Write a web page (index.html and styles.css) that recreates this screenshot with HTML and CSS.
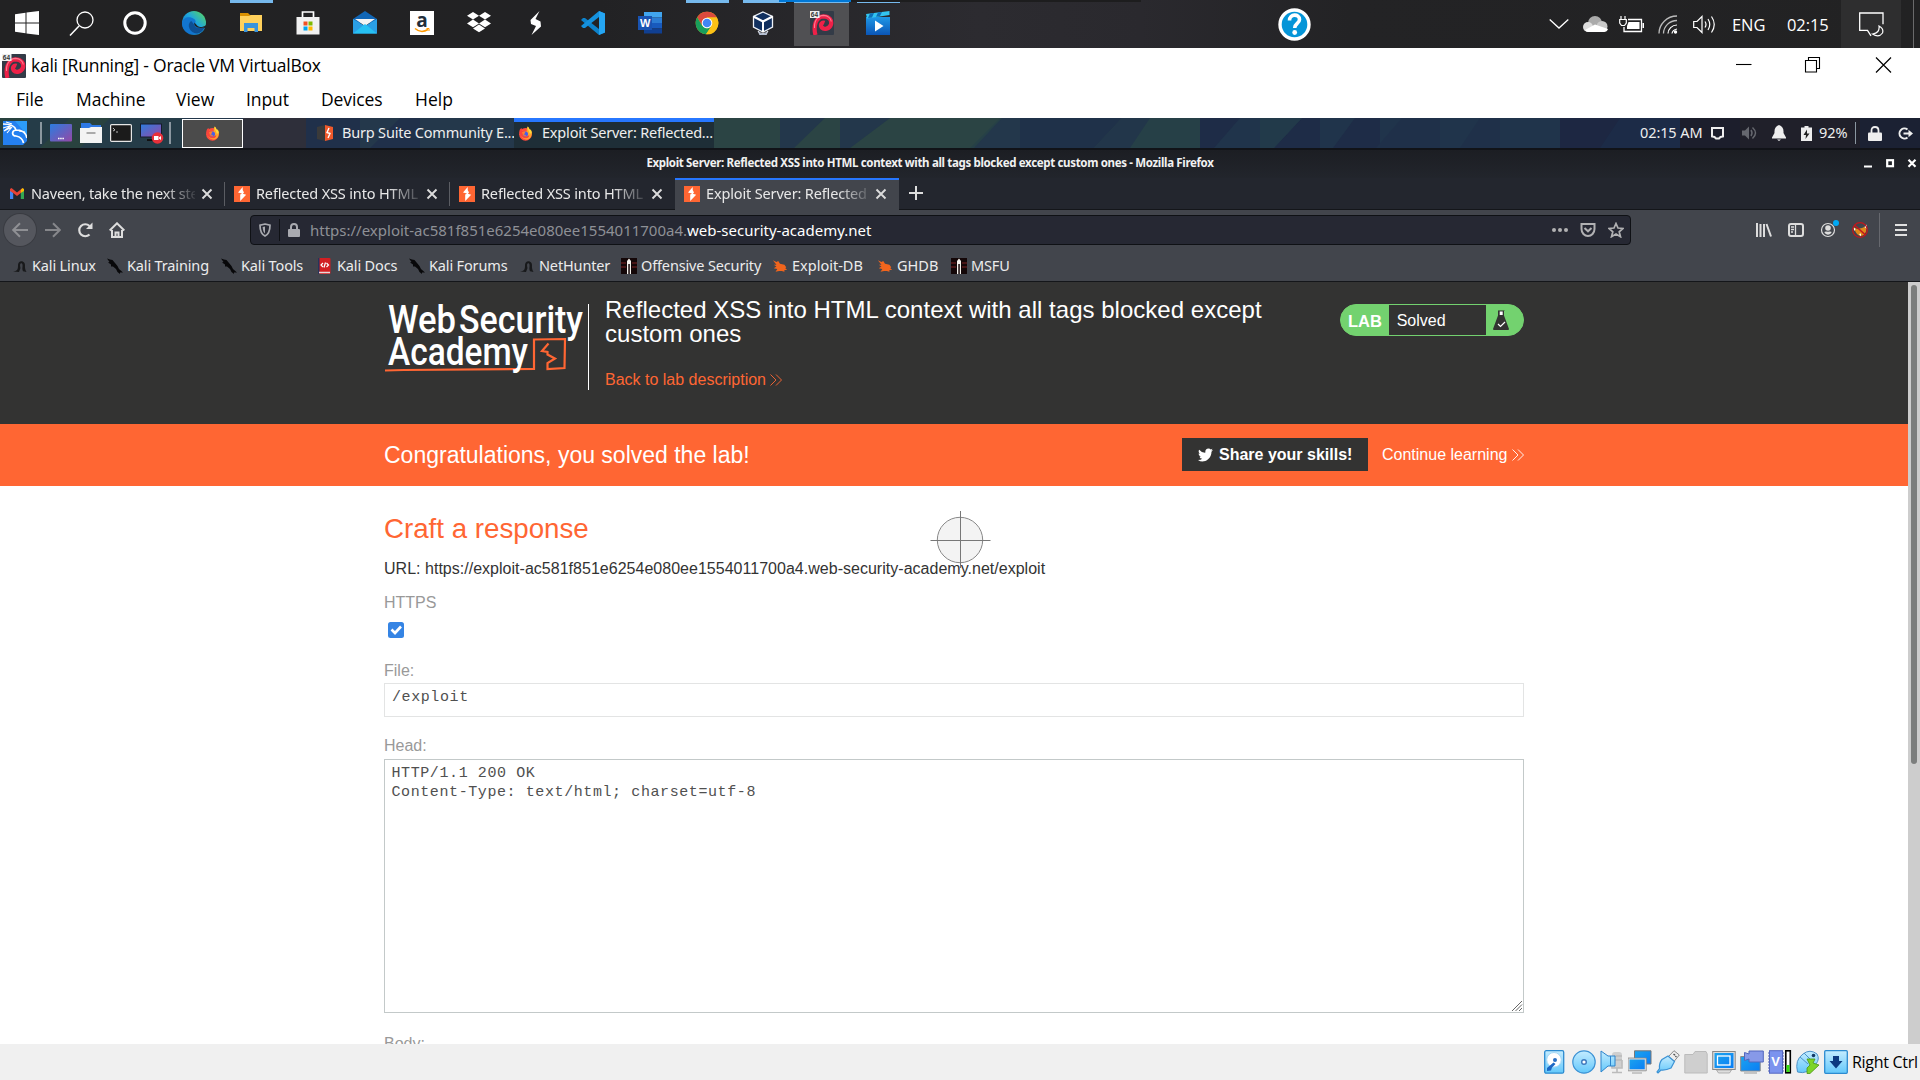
FILE: index.html
```html
<!DOCTYPE html>
<html lang="en">
<head>
<meta charset="utf-8">
<title>kali [Running] - Oracle VM VirtualBox</title>
<link rel="stylesheet" href="styles.css">
</head>
<body>
<svg class="defs" width="0" height="0" aria-hidden="true">
  <defs>
    <linearGradient id="gBlue" x1="0" y1="0" x2="0" y2="1"><stop offset="0" stop-color="#c4ecff"/><stop offset="1" stop-color="#63c8fb"/></linearGradient>
    <linearGradient id="gScreen" x1="0" y1="0" x2="1" y2="1"><stop offset="0" stop-color="#2b7de0"/><stop offset="1" stop-color="#9548a5"/></linearGradient>
    <linearGradient id="gEdge" x1="0" y1="1" x2="1" y2="0"><stop offset="0" stop-color="#0c59a4"/><stop offset=".55" stop-color="#1fa6df"/><stop offset="1" stop-color="#5fdc4f"/></linearGradient>
    <linearGradient id="gPlay" x1="0" y1="0" x2="0" y2="1"><stop offset="0" stop-color="#1f97e6"/><stop offset="1" stop-color="#0b55b6"/></linearGradient>
    <linearGradient id="gDeep" x1="0" y1="0" x2="1" y2="1"><stop offset="0" stop-color="#1ca4ee"/><stop offset="1" stop-color="#0a7df5"/></linearGradient>
    <symbol id="burp" viewBox="0 0 16 16"><rect width="16" height="16" fill="#f63"/><path d="M8.7 1 4 6.6 8 7.6 6.2 8.6V15L12.2 8.8 8.9 7.7 10 6.5 8.7 4z" fill="#fff"/></symbol>
    <symbol id="fox" viewBox="0 0 16 16"><circle cx="8" cy="8.8" r="6.8" fill="#ff4a3d"/><path d="M3 4.5C2 8 3 13.5 8.5 14.5 14 14.6 16.3 8.5 13.5 4.5 12.7 4.500 12 2.500 10.500.5 8.500 2.500 10 5 9 6z" fill="#ffa52b"/><path d="M10.500.5C9.500 3 12 5 12.500 8L14.500 8C15 6 14 4 13 3.500L13 5C12 3 11.500 1.500 10.500.5z" fill="#ffdc3b"/><path d="M1.500 7C1 3.500 3.500 2 4 2.500L4.500 5 7.500 6 7 8 5 9.500C7 12 10.500 11 12 9.500 12.500 14 4 15.500 1.500 7z" fill="#f9443c"/><circle cx="8" cy="8.500" r="2.700" fill="#485ee8"/><path d="M4.300 6.500 8 6.200 6.500 9 9 10.500C6.500 11.500 4.500 9.500 4.300 6.500z" fill="#ff7d2e"/></symbol>
    <symbol id="debian" viewBox="0 0 24 24"><rect width="24" height="24" rx="1" fill="#333b47"/><path d="M5.500 24C3 15 6 5.500 13.500 5.300 19.500 5.300 22 9.500 21 13.500 19.500 18 14 19 11.800 16.500 9.800 13.500 12 10.800 14.500 11.800" fill="none" stroke="#ee2148" stroke-width="4.200"/><path d="M4.500 17C4 9.500 8 4.600 13.500 4.400 18 4.400 21 7.500 21.300 10.500" fill="none" stroke="#ff7b91" stroke-width="1.100"/><rect width="9.500" height="7" fill="#eee"/><text x=".8" y="6" font-size="6.500" font-weight="700" font-family="Liberation Sans" fill="#333">64</text></symbol>
    <symbol id="slash" viewBox="0 0 16 16"><path d="M0 .5 3 1.500 5.500 2 8 5 10.500 8 12 11 16 14.500 13 14.500 13 16 10.500 14 9 11 6 8.500 4 8.500 4 6.500 1 4.500 2.500 4z" fill="#08080a"/></symbol>
    <symbol id="arch" viewBox="0 0 16 16"><path d="M1 13.500C5 13 6 11.500 6 8 5.500 3.500 10 1.500 12.500 5 13.700 7.500 12 9.500 14.500 14L11 13.300C9.500 10 11.500 7.500 10 5.500 7.500 4.500 8 8 8.500 10L7 14z" fill="#18191b"/></symbol>
    <symbol id="roach" viewBox="-1 -1.500 18 18"><path d="M0 1 4 3 6 2 8 5 13 6 15 9 14 10 16 12 13 12 13 14 10 13 7 13 3 14 5 11 1 10 4 8 1 6 4 6z" fill="#f1651d"/></symbol>
    <symbol id="offsec" viewBox="0 0 16 16"><rect width="16" height="16" fill="#140708"/><path d="M0 5H5M0 9H5M11 5H16M11 9H16" stroke="#5a1a1a" stroke-width="1.500"/><path d="M6 16V3L8 .5 10 3V16H8.800V6H7.300V16z" fill="#f5f1ec"/></symbol>
    <symbol id="close" viewBox="0 0 12 12"><path d="M1.500 1.500 10.500 10.500M10.500 1.500 1.500 10.500" stroke="#dcdcdc" stroke-width="1.900"/></symbol>
    <symbol id="chev" viewBox="0 0 12 12"><path d="M.5.500 6 6 .5 11.500M6 .5 11.500 6 6 11.500" fill="none" stroke="currentColor" stroke-width=".9"/></symbol>
  </defs>
</svg>

<div class="desktop">
  <header class="taskbar">
    <div class="sys-slots">
      <div class="slot"><svg width="24" height="24" viewBox="0 0 24 24"><path d="M0 3.200 10.500 1.800V11.500H0zM11.500 1.600 24 0V11.500H11.500zM0 12.500H10.500V22.200L0 20.800zM11.500 12.500H24V24L11.500 22.400z" fill="#fff"/></svg></div>
      <div class="slot"><svg width="25" height="25" viewBox="0 0 25 25"><circle cx="16" cy="9" r="8" fill="none" stroke="#fff" stroke-width="1.300"/><path d="M10 15 1 24.500" stroke="#fff" stroke-width="1.500"/></svg></div>
      <div class="slot"><svg width="24" height="24" viewBox="0 0 24 24"><circle cx="12" cy="12" r="10.200" fill="none" stroke="#fff" stroke-width="3"/></svg></div>
    </div>
    <div class="apps">
      <div class="slot"><svg width="24" height="24" viewBox="0 0 24 24"><circle cx="12" cy="12" r="12" fill="url(#gEdge)"/><path d="M0 12C1 6 8 5 12 8 15 10 13 12 12.500 13 14 18 20 17 23 15.500 20 22 12 25 6 22 2 20 0 16 0 12z" fill="#1275cf"/><path d="M9 10C4 14 8 22 15 22.500 19 22 22 19 23 15.500 18 18 13 17.500 12 13.500 11 12 10 10.500 9 10z" fill="#0d4f94"/><path d="M12.500 11.500C15 14 15 16 20 16 22 15.500 23 15 24 14L24 19 22 16.500C16 18 11 15 12.500 11.500z" fill="#212123"/></svg></div>
      <div class="slot open"><svg width="24" height="24" viewBox="0 0 24 24"><path d="M1 2H9L11 4H12V8H1z" fill="#d99000"/><path d="M1 5H10L12 4H23V20H1z" fill="#ffd15c"/><path d="M5 12H19V21H15.500V17H8.500V21H5z" fill="#3a94dc"/></svg></div>
      <div class="slot"><svg width="24" height="24" viewBox="0 0 24 24"><path d="M6.500 6V1H17.500V6" fill="none" stroke="#fff" stroke-width="1.700"/><path d="M.5 6H23.500V23.500H.5z" fill="#f1f1f1"/><path d="M7.500 10.500H11.500V14.500H7.500z" fill="#f25022"/><path d="M12.500 10.500H16.500V14.500H12.500z" fill="#7fba00"/><path d="M7.500 15.500H11.500V19.500H7.500z" fill="#00a4ef"/><path d="M12.500 15.500H16.500V19.500H12.500z" fill="#ffb900"/></svg></div>
      <div class="slot"><svg width="24" height="24" viewBox="0 0 24 24"><path d="M0 8 12 0 24 8V12H0z" fill="#1166b5"/><path d="M2 8H22L12 15z" fill="#f4f4f4"/><path d="M0 8 12 15 24 8V22.500H0z" fill="#2a9fe6"/><path d="M0 22.500 12 13 24 22.500z" fill="#27c1f3"/></svg></div>
      <div class="slot"><svg width="24" height="24" viewBox="0 0 24 24"><rect width="24" height="24" fill="#fff"/><text x="6.300" y="15.500" font-family="Open Sans" font-weight="700" font-size="19" fill="#222e3b">a</text><path d="M5 17.500C9 21 14 21 18 18.500" fill="none" stroke="#f90" stroke-width="1.500"/><path d="M16.500 17.500H19V20" fill="none" stroke="#f90" stroke-width="1"/></svg></div>
      <div class="slot"><svg width="24" height="22" viewBox="0 0 24 22"><path d="M6 0 12 3.800 6 7.600 0 3.800zM18 0 24 3.800 18 7.600 12 3.800zM6 7.600 12 11.400 6 15.200 0 11.400zM18 7.600 24 11.400 18 15.200 12 11.400zM12 12.600 18 16.400 12 20.200 6 16.400z" fill="#fff"/></svg></div>
      <div class="slot"><svg width="14" height="24" viewBox="0 0 14 24"><path d="M10.500 0 1.500 9 2 13 7 15 2.500 24 12 15.500 11.500 10.500 6.500 8z" fill="#fff"/></svg></div>
      <div class="slot"><svg width="24" height="24" viewBox="0 0 24 24"><path d="M18 0 24 2.500V21.500L18 24 0 9 2 7 4 7 18 18z" fill="#0d82cb"/><path d="M18 0 24 2.500V21.500L18 24z" fill="#25a5f2"/><path d="M18 0V6L4 17 2 17 0 15z" fill="#1591dd"/></svg></div>
      <div class="slot"><svg width="24" height="24" viewBox="0 0 24 24"><path d="M6 1H24V6.500H6z" fill="#41a5ee"/><path d="M6 6.500H24V12H6z" fill="#2b7cd3"/><path d="M6 12H24V17.500H6z" fill="#185abd"/><path d="M6 17.500H24V22.500H6z" fill="#103f91"/><rect y="5" width="14" height="14" fill="#1953b1"/><text x="2" y="16" font-family="Liberation Sans" font-weight="700" font-size="11" fill="#fff">W</text></svg></div>
      <div class="slot open"><svg width="24" height="24" viewBox="0 0 24 24"><circle cx="12" cy="12" r="11.300" fill="#fbc116"/><path d="M2.200 6.300A11.300 11.300 0 0 1 21.800 6.400H12L7 14.500z" fill="#dc4a3d"/><path d="M2.200 6.300 7.200 14.800 12 17.600 16.500 15 11 23.300A11.300 11.300 0 0 1 2.200 6.300z" fill="#199f5b"/><path d="M12 6.400H21.800A11.300 11.300 0 0 1 11 23.300L16.500 15z" fill="#fbc116"/><circle cx="12" cy="12" r="5.300" fill="#fff"/><circle cx="12" cy="12" r="4.300" fill="#4286f4"/></svg></div>
      <div class="slot open"><svg class="nudge" width="22" height="24" viewBox="0 0 22 24"><path d="M6 20Q11 25 16 20L14 24H8z" fill="#8f9dbb" stroke="#e9edf5" stroke-width=".8"/><path d="M11 1 20.500 5.500V16L11 21 1.500 16V5.500z" fill="#11305f" stroke="#eef2f8" stroke-width="1.300"/><path d="M1.500 5.500 11 10.500 20.500 5.500M11 10.500V21" fill="none" stroke="#fff" stroke-width="2"/></svg></div>
      <div class="slot active"><svg width="24" height="24"><use href="#debian"/></svg></div>
      <div class="slot thin"><svg class="nudge" width="24" height="24" viewBox="0 0 24 24"><path d="M0 6H24V24H0z" fill="url(#gPlay)"/><path d="M0 3 23.500 0V4L1 7.500z" fill="#33c4f0"/><path d="M4 2.500 8 2 6 6.500 2 7zM12 1.500 16 1 14 5 10 5.700z" fill="#0c6fb8"/><path d="M9 9.500 17.500 15 9 20.500z" fill="#fff"/></svg></div>
    </div>
    <div class="help"><svg width="33" height="33" viewBox="0 0 33 33"><circle cx="16.500" cy="16.500" r="14.500" fill="#0495d8" stroke="#fff" stroke-width="3.400"/><path d="M11.500 12.500C11.500 5.500 21.500 5.500 21.500 11.500 21.500 15.500 16.700 15.500 16.700 20" fill="none" stroke="#fff" stroke-width="3.600"/><circle cx="16.700" cy="24.500" r="2.400" fill="#fff"/></svg></div>
    <div class="tray">
      <svg width="20" height="10" viewBox="0 0 20 10"><path d="M.7.500 10 9 19.300.500" fill="none" stroke="#fff" stroke-width="1.300"/></svg>
      <svg class="t-cloud" width="25" height="16" viewBox="0 0 25 16"><circle cx="12" cy="7" r="7" fill="#aaa"/><circle cx="5" cy="11" r="5" fill="#ddd"/><circle cx="19" cy="10.500" r="5.500" fill="#c9c9c9"/><path d="M2 14 12 8.500 25 13Q24 16 21 16H5Q3 16 2 14z" fill="#fff"/></svg>
      <svg class="t-bat" width="25" height="17" viewBox="0 0 25 17"><path d="M9 3.500H22.500V15.500H5V11" fill="none" stroke="#fff" stroke-width="1.300"/><path d="M9.500 6H20.500V13H8V10z" fill="#fff"/><path d="M23.500 7H25V12H23.500z" fill="#fff"/><path d="M2 0V3.500M6 0V3.500M.7 3.500H7.300V7L5.500 9.500H2.500L.7 7z" fill="#222" stroke="#fff" stroke-width="1.200"/></svg>
      <svg class="t-wifi" width="20" height="19" viewBox="0 0 20 19"><path d="M1 18.500C1 9 9 1 19 1M5.500 18.500C5.500 11.500 11.500 5.500 19 5.500" fill="none" stroke="#bbb" stroke-width="1.300"/><path d="M10 18.500C10 14 14 10 19 10M14 18.500Q14.500 15 19 14" fill="none" stroke="#fff" stroke-width="1.200"/><circle cx="17.500" cy="17" r="1.700" fill="#fff"/></svg>
      <svg class="t-vol" width="23" height="19" viewBox="0 0 23 19"><path d="M.7 6.500H4L9 1.500V17.500L4 12.500H.7z" fill="none" stroke="#fff" stroke-width="1.200"/><path d="M12 6.500Q14 9.500 12 12.500M15 4Q18.500 9.500 15 15M18.500 1.500Q24 9.500 18.500 17.500" fill="none" stroke="#fff" stroke-width="1.200"/></svg>
      <span class="lang">ENG</span>
      <span class="clock">02:15</span>
      <div class="notif"><svg width="25" height="25" viewBox="0 0 25 25"><path d="M13 18M12 23.500 8.500 18H.7V.7H24V12" fill="none" stroke="#fff" stroke-width="1.300" transform="translate(0 .3)"/><path d="M20 14Q21 21 13.500 22 20 26 23.500 21 25 16.500 20 14z" fill="none" stroke="#fff" stroke-width="1.200"/></svg></div>
      <i class="peek"></i>
    </div>
    <i class="strip-blue"></i><i class="strip-dark"></i>
  </header>

  <div class="vm-title">
    <svg width="24" height="24"><use href="#debian"/></svg>
    <span class="vm-name">kali [Running] - Oracle VM VirtualBox</span>
    <svg class="winbtns" width="156" height="16" viewBox="0 0 156 16"><path d="M0 7.500H15.500" stroke="#000" stroke-width="1.100"/><path d="M69.500 3.500H80.500V15H69.500zM72.500 3.500V.5H83.500V11.500H80.500" fill="none" stroke="#000" stroke-width="1.100"/><path d="M140 .5 155 15.500M155 .5 140 15.500" stroke="#000" stroke-width="1.200"/></svg>
  </div>
  <nav class="vm-menu"><span class="m1">File</span><span class="m2">Machine</span><span class="m3">View</span><span class="m4">Input</span><span class="m5">Devices</span><span class="m6">Help</span></nav>

  <div class="panel">
    <svg class="wall" width="1920" height="30" viewBox="0 0 1920 30">
      <rect width="1920" height="30" fill="#22364a"/>
      <path d="M0 0H182V30H0z" fill="#253c48"/><path d="M30 0 0 30H0V0zM70 0H110L80 30H40z" fill="#29423f"/>
      <path d="M306 0H514V30H306z" fill="#20304a"/><path d="M360 0H400L370 30H360zM420 0H514V30H420z" fill="#24384b"/>
      <path d="M714 0H1200V30H714z" fill="#264047"/><path d="M714 0H780V30H714zM800 0H840V30H794zM890 0H900V30H850zM960 0H1000L970 30H900V0z" fill="#2b4444"/><path d="M780 0H825L794 30H780zM840 0H890L850 30H840zM1002 0H1020V30H974z" fill="#23374b"/>
      <path d="M1020 0H1122L1094 30H1020z" fill="#1f3149"/><path d="M1122 0H1150L1130 30H1094z" fill="#22364a"/>
      <path d="M1200 0H1560V30H1200z" fill="#20344b"/><path d="M1200 0H1240L1214 30H1200zM1302 0H1320V30H1274zM1355 0H1380V30H1333z" fill="#1e2c47"/><path d="M1260 0H1302L1274 30H1260z" fill="#223a4a"/><path d="M1402 0H1440V30H1376zM1480 0H1500V30H1460z" fill="#1f3049"/>
      <path d="M1560 0H1680V30H1560z" fill="#1d2742"/><path d="M1620 0H1680V30H1600z" fill="#1c2b47"/><path d="M1680 0H1920V30H1680z" fill="#1c1e2c"/><path d="M1740 0H1860V30H1740z" fill="#20202a"/><path d="M1860 0H1920V30H1860z" fill="#1b2133"/>
    </svg>
    <div class="launchers">
      <svg width="24" height="24" viewBox="0 0 24 24"><path d="M0 0H24V20L20 24H0z" fill="#2480f0"/><path d="M12 0H24V14z" fill="#2c9cf8"/><path d="M0 3C7 3 12 5 13 9 19 9 23 12 24 17M13 9C8 10 9 15 13 15 18 16 20 19 20.500 22" fill="none" stroke="#fff" stroke-width="1.700"/><path d="M0 7 8 4.500 1 10 9 6 4 12M3 1 9 3M16 10 22 11" fill="none" stroke="#fff" stroke-width="1.100"/></svg>
      <i class="psep"></i>
      <svg width="22" height="18" viewBox="0 0 22 18"><rect width="22" height="17.500" rx="1" fill="url(#gScreen)"/><path d="M8 14.500H14" stroke="#fff" stroke-width="1.500" stroke-dasharray="1.500 .7"/></svg>
      <svg width="22" height="20" viewBox="0 0 22 20"><path d="M1 0H10L12 2H21V8H1z" fill="#2e78e4"/><path d="M0 5H9L11 4H22V20H0z" fill="#f3f3f3"/><path d="M6.500 10H15.500" stroke="#aaa" stroke-width="2"/></svg>
      <svg width="22" height="18" viewBox="0 0 22 18"><rect x=".6" y=".6" width="20.800" height="16.800" rx="1" fill="#1b1b1b" stroke="#e6e6e6" stroke-width="1.200"/><path d="M3 4 5 6 3 7M6 8H8" stroke="#bbb" fill="none"/></svg>
      <svg width="24" height="21" viewBox="0 0 24 21"><rect x=".5" y="1" width="21" height="13" fill="url(#gScreen)" stroke="#161b2c"/><path d="M7 16H14V18H7z" fill="#111"/><circle cx="17.500" cy="15" r="5.800" fill="#e8303a"/><path d="M14 13H18.500V17H14zM19 14.500 21 13V17L19 15.600z" fill="#fff"/></svg>
      <i class="psep s2"></i>
    </div>
    <div class="ws"><svg width="15" height="15"><use href="#fox"/></svg></div>
    <div class="gapband"></div>
    <div class="task t-burp"><svg width="16" height="16" viewBox="0 0 16 16"><path d="M0 2 8 0V16L0 14z" fill="#3a3a3a"/><path d="M8 0 16 2V14L8 16z" fill="#f0592b"/><path d="M12 3 10 7.500 13 8.500 11 13" fill="none" stroke="#fff" stroke-width="1.400"/></svg><span>Burp Suite Community E...</span></div>
    <div class="task t-fox"><svg width="15" height="15"><use href="#fox"/></svg><span>Exploit Server: Reflected...</span></div>
    <div class="ptray">
      <span class="ptime">02:15 AM</span>
      <svg class="p1" width="13" height="13" viewBox="0 0 13 13"><path d="M1 1H12V9.500L9.500 10 8 11.500H5L3.500 10 1 9.500z" fill="none" stroke="#eee" stroke-width="2"/></svg>
      <svg class="p2" width="15" height="14" viewBox="0 0 15 14"><path d="M0 4.500H3L7 .5V13.500L3 9.500H0z" fill="#66686f"/><path d="M9 4Q11 7 9 10M10.500 1.500Q16.500 7 10.500 12.500" fill="none" stroke="#66686f" stroke-width="1.500"/></svg>
      <svg class="p3" width="14" height="16" viewBox="0 0 14 16"><path d="M7 0Q12 1.500 11.500 8L14 12.500V13.500H0V12.500L2.500 8Q2 1.500 7 0zM5 14.500H9L7 16z" fill="#eee"/></svg>
      <svg class="p4" width="11" height="15" viewBox="0 0 11 15"><path d="M3.500 0H7.500V1.500H11V15H0V1.500H3.500z" fill="#eee"/><path d="M6 3.500 2.500 9H5L4.500 13 8.500 7.500H6z" fill="#222"/></svg>
      <span class="pbat">92%</span><i class="psep s3"></i>
      <svg class="p5" width="14" height="15" viewBox="0 0 14 15"><path d="M3.500 7V4.500Q3.500 1 7 1T10.500 4.500V7" fill="none" stroke="#eee" stroke-width="1.800"/><rect y="6.500" width="14" height="8.500" rx="1" fill="#eee"/></svg>
      <svg class="p6" width="15" height="13" viewBox="0 0 15 13"><path d="M9.500 2.500A5 5 0 1 0 9.500 10.500" fill="none" stroke="#eee" stroke-width="2"/><path d="M5.500 5.500H10.500V2.800L15 6.500 10.500 10.200V7.500H5.500z" fill="#eee"/></svg>
    </div>
  </div>

  <div class="fx-title"><span>Exploit Server: Reflected XSS into HTML context with all tags blocked except custom ones - Mozilla Firefox</span>
    <svg class="fxbtns" width="53" height="9" viewBox="0 0 53 9"><path d="M0 7.500H8" stroke="#fff" stroke-width="2"/><rect x="23.200" y="1.200" width="5.800" height="6" fill="none" stroke="#fff" stroke-width="2.200"/><path d="M44.500.8 51.500 7.800M51.500.8 44.500 7.800" stroke="#fff" stroke-width="2.200"/></svg>
  </div>
  <div class="tabs">
    <div class="tab first"><svg width="14" height="11" viewBox="0 0 14 11"><path d="M0 1.500V11H3.200V5z" fill="#4285f4"/><path d="M14 1.500V11H10.800V5z" fill="#34a853"/><path d="M0 1 1.500 0 7 4.500 12.500 0 10.800 5 7 8 3.200 5 0 3z" fill="#ea4335"/><path d="M10.800 2 12.500 0 14 1V3L10.800 5z" fill="#fbbc04"/></svg><span class="tt">Naveen, take the next ste</span><svg class="x" width="12" height="12"><use href="#close"/></svg></div>
    <div class="tab"><svg width="16" height="16"><use href="#burp"/></svg><span class="tt">Reflected XSS into HTML</span><svg class="x" width="12" height="12"><use href="#close"/></svg></div>
    <div class="tab"><svg width="16" height="16"><use href="#burp"/></svg><span class="tt">Reflected XSS into HTML</span><svg class="x" width="12" height="12"><use href="#close"/></svg></div>
    <div class="tab on"><svg width="16" height="16"><use href="#burp"/></svg><span class="tt">Exploit Server: Reflected</span><svg class="x" width="12" height="12"><use href="#close"/></svg></div>
    <svg class="plus" width="14" height="14" viewBox="0 0 14 14"><path d="M7 0V14M0 7H14" stroke="#ddd" stroke-width="2"/></svg>
  </div>
  <div class="navbar">
    <div class="back"><svg width="16" height="16" viewBox="0 0 16 16"><path d="M16 8H1.500M8 1.200 1.200 8 8 14.800" fill="none" stroke="#8f9094" stroke-width="2"/></svg></div>
    <svg class="fwd" width="16" height="16" viewBox="0 0 16 16"><path d="M0 8H14.500M8 1.200 14.800 8 8 14.800" fill="none" stroke="#86878b" stroke-width="2"/></svg>
    <svg class="rel" width="16" height="16" viewBox="0 0 16 16"><path d="M12.500 12.500A6 6 0 1 1 12.500 4" fill="none" stroke="#ddd" stroke-width="2.200"/><path d="M15.500.5V7H9z" fill="#ddd"/></svg>
    <svg class="home" width="16" height="16" viewBox="0 0 16 16"><path d="M.7 8.500 8 1.300 15.300 8.500" fill="none" stroke="#ddd" stroke-width="2"/><path d="M3 8V15H13V8M6.500 15V10.500H9.500V15" fill="none" stroke="#ddd" stroke-width="2"/></svg>
    <div class="url">
      <svg width="12" height="14" viewBox="0 0 12 14"><path d="M6 1 11 2.200C11 8 10 11 6 13 2 11 1 8 1 2.200z" fill="none" stroke="#a9aab0" stroke-width="1.700"/><path d="M6 3.500V10.500Q4 9 3.600 4z" fill="#a9aab0"/></svg>
      <i class="usep"></i>
      <svg width="12" height="14" viewBox="0 0 12 14"><path d="M3 7V4Q3 1 6 1T9 4V7" fill="none" stroke="#a9aab0" stroke-width="2"/><rect y="6" width="12" height="8" rx="1" fill="#a9aab0"/></svg>
      <span class="addr">https://exploit-ac581f851e6254e080ee1554011700a4.<b>web-security-academy.net</b></span>
      <div class="u-end">
        <svg width="16" height="4" viewBox="0 0 16 4"><circle cx="2" cy="2" r="2"/><circle cx="8" cy="2" r="2"/><circle cx="14" cy="2" r="2"/></svg>
        <svg width="16" height="14" viewBox="0 0 16 14"><path d="M1.500 1H14.500V6C14.500 10 11.500 13 8 13S1.500 10 1.500 6z" fill="none" stroke="#b1b1b3" stroke-width="2"/><path d="M4.500 5 8 8.300 11.500 5" fill="none" stroke="#b1b1b3" stroke-width="2"/></svg>
        <svg width="16" height="16" viewBox="0 0 16 16"><path d="M8 1.500 10 6 15 6.500 11.200 9.800 12.500 14.700 8 12 3.500 14.700 4.800 9.800 1 6.500 6 6z" fill="none" stroke="#b1b1b3" stroke-width="1.700"/></svg>
      </div>
    </div>
    <div class="tools">
      <svg width="16" height="14" viewBox="0 0 16 14"><path d="M1 0V14M4.500 1V14M8 1V14M10.500 1 15 13.500" stroke="#ddd" stroke-width="2"/></svg>
      <svg width="16" height="14" viewBox="0 0 16 14"><rect x="1" y="1" width="14" height="12" rx="2" fill="none" stroke="#ddd" stroke-width="2"/><path d="M7.500 1V13M3 4H6M3 6.500H6M3 9H5" stroke="#ddd" stroke-width="1.300"/></svg>
      <svg width="20" height="20" viewBox="0 0 20 20"><circle cx="8" cy="12" r="6.500" fill="none" stroke="#ddd" stroke-width="1.200"/><circle cx="8" cy="10" r="2.800" fill="#ddd"/><path d="M4.200 14Q5.500 13 8 13.800 10.500 13 11.800 14 10.500 16.700 8 16.700T4.200 14z" fill="#ddd"/><circle cx="16" cy="5" r="3" fill="#00a9f5"/></svg>
      <svg width="16" height="16" viewBox="0 0 16 16"><path d="M1.500 5 5 7 10 6 14.500 4 14 9.500Q12 14 8 14 3.500 12 1.500 5z" fill="#e08a1b"/><path d="M1 5 3.500 7 2.500 9zM14.500 2.500 12.500 5 15 7zM7 12 9 11.500 9 14.500z" fill="#fff"/><circle cx="8" cy="8" r="7.300" fill="none" stroke="#c4161c" stroke-width="1.300"/><path d="M2.500 3 13.500 13" stroke="#c4161c" stroke-width="1.600"/></svg>
      <i class="tsep"></i>
      <svg width="12" height="12" viewBox="0 0 12 12"><path d="M0 1H12M0 6H12M0 11H12" stroke="#e0e0e0" stroke-width="2"/></svg>
    </div>
  </div>
  <div class="bookmarks">
    <div class="bm b1"><svg width="16" height="16"><use href="#arch"/></svg><span>Kali Linux</span></div>
    <div class="bm b2"><svg width="16" height="16"><use href="#slash"/></svg><span>Kali Training</span></div>
    <div class="bm b3"><svg width="16" height="16"><use href="#slash"/></svg><span>Kali Tools</span></div>
    <div class="bm b4"><svg width="16" height="16" viewBox="0 0 16 16"><rect x="1" width="12.500" height="16" rx="1" fill="#d21f22"/><path d="M1 0H2.500V16H1z" fill="#27335c"/><path d="M2 14.500H13" stroke="#e6d9d9" stroke-width="1.500"/><path d="M6 5 4 7 6 9M9.500 5 11.500 7 9.500 9M8.500 4.500 7 9.500" fill="none" stroke="#fff" stroke-width="1.200"/></svg><span>Kali Docs</span></div>
    <div class="bm b5"><svg width="16" height="16"><use href="#slash"/></svg><span>Kali Forums</span></div>
    <div class="bm b6"><svg width="16" height="16"><use href="#arch"/></svg><span>NetHunter</span></div>
    <div class="bm b7"><svg width="16" height="16"><use href="#offsec"/></svg><span>Offensive Security</span></div>
    <div class="bm b8"><svg width="16" height="16"><use href="#roach"/></svg><span>Exploit-DB</span></div>
    <div class="bm b9"><svg width="16" height="16"><use href="#roach"/></svg><span>GHDB</span></div>
    <div class="bm b10"><svg width="16" height="16"><use href="#offsec"/></svg><span>MSFU</span></div>
  </div>

  <div class="viewport">
    <main class="page">
      <section class="lab-head"><div class="wrap">
        <svg class="logo" width="204" height="86" viewBox="0 0 204 86">
          <g font-family="Roboto" font-weight="500" font-size="38" fill="#fff"><text x="4" y="28.500" textLength="68" lengthAdjust="spacingAndGlyphs">Web</text><text x="75" y="28.500" textLength="124" lengthAdjust="spacingAndGlyphs">Security</text></g>
          <path d="M1 66.500 20 66 150 65V35.500L181 35 180.500 64 163.500 65V59L171 54.500 163.500 50.500V48L158 47 164.500 39.500" fill="none" stroke="#f63" stroke-width="2.200"/>
          <text x="4" y="61" textLength="140" lengthAdjust="spacingAndGlyphs" font-family="Roboto" font-weight="500" font-size="38" fill="#fff">Academy</text>
        </svg>
        <div class="lab-title"><h1>Reflected XSS into HTML context with all tags blocked except<br>custom ones</h1><a class="backlink">Back to lab description <svg width="12" height="12"><use href="#chev"/></svg></a></div>
        <div class="badge"><b>LAB</b><span>Solved</span><svg width="37" height="30" viewBox="0 0 37 30"><path d="M12 6H18V10.500L23 24Q23 25 22 25H8Q7 25 7 24L12 10.500z" fill="#333332"/><path d="M12 5.500H18.500" stroke="#4d7d4a"/><path d="M13.700 6.500H16.700V10H13.700z" fill="#fff"/><path d="M12 19 14.500 21.500 19 17" fill="none" stroke="#fff" stroke-width="1.200"/></svg></div>
      </div></section>
      <section class="banner"><div class="wrap">
        <p>Congratulations, you solved the lab!</p>
        <div class="share"><svg width="15" height="14" viewBox="0 0 15 13"><path d="M15 1.500 13.500 3.300C13.500 10 8 13 4.500 13Q2 13 0 11.500 3 11.500 4.200 10.300 2 10 1.500 8.200H2.800Q.5 7 .5 5L1.800 5.400Q-.2 3 1.200 1.200 4 4.500 7.300 4.300 7 0 10.500 0 12 0 12.700 1L14.500.3 13.400 2z" fill="#fff"/></svg><span>Share your skills!</span></div>
        <a class="cont">Continue learning <svg width="12" height="12"><use href="#chev"/></svg></a>
      </div></section>
      <section class="form">
        <h2>Craft a response</h2>
        <p class="target">URL: https://exploit-ac581f851e6254e080ee1554011700a4.web-security-academy.net/exploit</p>
        <label class="lb">HTTPS</label>
        <svg class="check" width="16" height="16" viewBox="0 0 16 16"><rect width="16" height="16" rx="2.500" fill="#3584e4"/><path d="M3.500 7.500 7 11 13 4.500" fill="none" stroke="#fff" stroke-width="2.600"/></svg>
        <label class="lb l-file">File:</label>
        <div class="input">/exploit</div>
        <label class="lb l-head">Head:</label>
        <div class="area">HTTP/1.1 200 OK<br>Content-Type: text/html; charset=utf-8<svg class="grip" width="12" height="12" viewBox="0 0 12 12"><path d="M1 11 11 1M4.500 11 11 4.500M8 11 11 8" stroke="#666" stroke-width="1"/></svg></div>
        <label class="lb l-body">Body:</label>
      </section>
    </main>
    <div class="scroll"><i></i></div>
    <svg class="cursor" width="61" height="60" viewBox="0 0 61 60"><circle cx="30" cy="30" r="22.700" fill="#777" fill-opacity=".09" stroke="#888" stroke-width="1"/><path d="M.5 30.500H60.500M30.500 1V58" stroke="#777" stroke-width="1"/></svg>
  </div>

  <footer class="status">
    <svg viewBox="0 0 24 24"><rect x=".7" y=".7" width="19" height="22.500" rx="1.500" fill="url(#gBlue)" stroke="#2c8bd0" stroke-width="1.300"/><circle cx="10" cy="9.800" r="7.300" fill="#fff" stroke="#a9d8f5"/><circle cx="11" cy="10" r="2" fill="#2a6fc4"/><path d="M9.500 12.500 11.500 14 8 17.500 7 20.500 3 21 3 18z" fill="#1c67c4"/></svg>
    <svg viewBox="0 0 24 24"><circle cx="12" cy="12" r="11.200" fill="url(#gBlue)" stroke="#3d92d4" stroke-width="1.200"/><circle cx="12" cy="12" r="2.300" fill="#fff" stroke="#3d78bd" stroke-width="1.400"/></svg>
    <svg viewBox="0 0 24 24"><rect x="12" y="2" width="10" height="16" rx="3" fill="#cfcfcf"/><path d="M12 10V18H22V10M17 18V22M12 22.500H22M14 6H22M14 10H22" stroke="#bbb" stroke-width="1.600" fill="none"/><path d="M1 1 8 6H15V16H8L1 22z" fill="url(#gBlue)" stroke="#2c83cc"/><path d="M10.500 6V16" stroke="#2c83cc"/></svg>
    <svg viewBox="0 0 24 24"><path d="M6.500.8H23V14H6.500z" fill="url(#gDeep)" stroke="#777"/><path d="M.8 8.800H17.500V20H.8z" fill="url(#gDeep)" stroke="#ddd" stroke-width="1.500"/><path d="M0 8H18.300V20.800H0zM4 23H14" fill="none" stroke="#888" stroke-width=".8"/></svg>
    <svg viewBox="0 0 24 24"><path d="M18 .7 23.300 5 18 11.500 12.500 6.500z" fill="#eee" stroke="#888"/><path d="M17.500 4 19 5.200M19.500 7 20.300 6" stroke="#555" stroke-width="1.500"/><path d="M12 6 18.500 11.500 15 18Q10 20.500 5 20L2 23 1 22 3.500 18.500Q3 13 6 9.500z" fill="url(#gBlue)" stroke="#3c92d4" stroke-width="1.200"/></svg>
    <svg viewBox="0 0 24 24"><path d="M.8 4.500H9L11 1.500H22L23.200 4V23H.8z" fill="#cfcfcf" stroke="#bbb"/></svg>
    <svg viewBox="0 0 24 24"><rect x=".7" y="1.500" width="22.500" height="18" fill="#ddd" stroke="#888"/><rect x="2.500" y="3" width="19" height="15" fill="url(#gDeep)"/><rect x="5.500" y="6" width="12.500" height="9" fill="none" stroke="#fff" stroke-width="1.300"/><path d="M4.500 20H19.500L17.500 23H6.500z" fill="#ddd" stroke="#999" stroke-width=".7"/></svg>
    <svg viewBox="0 0 24 24"><path d="M.7 6.500H20.200V21H.7z" fill="url(#gDeep)" stroke="#888"/><path d="M4.500 2.500 9 4V1H23.300V12H9V9L4.500 10.500z" fill="#8799e8" stroke="#5267bd"/><path d="M4 23H17" stroke="#999"/></svg>
    <svg viewBox="0 0 24 24"><path d="M0 3H16M0 6H16M0 9H16M0 12H16M0 15H16M0 18H16M0 21H16" stroke="#5060b8"/><rect x="1.500" y=".7" width="13" height="22.500" fill="#7b93ee" stroke="#5467c2"/><text x="3.300" y="16" font-family="Liberation Sans" font-weight="700" font-size="13" fill="#fff">V</text><rect x="17.800" y=".8" width="4.500" height="22" fill="#fff" stroke="#000" stroke-width="1.600"/><path d="M18.500 15H21.500V22H18.500z" fill="#35e010"/></svg>
    <svg viewBox="0 0 24 24"><path d="M1.500 22Q-1.500 10 7 4 14-1.500 21 4 24 9 20 14 12 25 1.500 22z" fill="url(#gBlue)" stroke="#4b91c8"/><path d="M4 7 12 14M8 3 14 9" stroke="#4b91c8"/><path d="M11 9H19L17 13 23 15 14 23.500H11V18L14 15z" fill="#7cd42a" stroke="#4a9414" stroke-width=".8"/><circle cx="17.500" cy="5.500" r="1.800" fill="#143a66"/></svg>
    <svg viewBox="0 0 24 24"><rect x=".7" y=".7" width="22.600" height="22.600" rx="1" fill="url(#gBlue)" stroke="#2c8bd0" stroke-width="1.300"/><path d="M9 6H15V11H18.500L12 18.500 5.500 11H9z" fill="#0c3a80"/></svg>
    <span>Right Ctrl</span>
  </footer>
</div>
</body>
</html>
```
FILE: styles.css
```css
* { box-sizing: border-box; }
body { margin: 0; background: #fff; overflow: hidden; }
svg { display: block; flex: none; }
i { display: block; flex: none; }
h1, h2, p { margin: 0; font-weight: 400; }
.defs { position: absolute; }
.desktop { width: 1920px; height: 1080px; display: flex; flex-direction: column; overflow: hidden; font-family: "Noto Sans", sans-serif; white-space: nowrap; }

/* Windows taskbar */
.taskbar { position: relative; height: 48px; flex: none; display: flex; background: linear-gradient(90deg, #222223 0, #222224 600px, #2c2b30 980px, #2a292e 1140px, #232325 1350px, #222223 100%); }
.sys-slots { display: grid; grid-template-columns: repeat(3, 54px); width: 165.500px; }
.apps { display: grid; grid-template-columns: repeat(13, 57.050px); }
.slot { position: relative; display: flex; align-items: center; justify-content: center; height: 46px; }
.open::before { content: ""; position: absolute; top: 0; left: 7px; width: 43px; height: 3px; background: #76b9ed; }
.nudge { margin-right: 2px; }
.active { background: #505053; margin: 0 1px; border-top: 3px solid #76b9ed; padding-bottom: 3px; }
.thin::before { content: ""; position: absolute; top: 2px; left: 7px; width: 43px; height: 1px; background: #76b9ed; }
.help { margin-left: 371px; padding-top: 8px; width: 33px; }
.strip-blue { position: absolute; left: 779px; top: 0; width: 72px; height: 2px; background: #0078d7; }
.strip-dark { position: absolute; left: 851px; top: 0; width: 290px; height: 2px; background: #1d1d1e; }
.tray { margin-left: auto; display: flex; align-items: center; color: #fff; font-family: "Open Sans", sans-serif; font-size: 16.500px; height: 48px; }
.t-cloud { margin-left: 14px; }
.t-bat { margin-left: 11px; }
.t-wifi { margin-left: 14px; }
.t-vol { margin-left: 15px; }
.lang { margin-left: 16px; width: 55px; letter-spacing: -.1px; }
.clock { width: 54px; letter-spacing: -.1px; }
.notif { width: 60px; height: 48px; background: #2e2e2f; display: flex; align-items: center; justify-content: center; }
.peek { width: 1px; height: 48px; background: #6a6a6b; margin: 0 6px 0 12px; }

/* VirtualBox window */
.vm-title { height: 35px; flex: none; display: flex; align-items: center; padding: 0 28px 0 2px; font-family: "Open Sans", sans-serif; font-size: 17.500px; color: #000; }
.vm-name { margin-left: 5px; margin-bottom: 2px; letter-spacing: -.24px; }
.winbtns { margin: 0 0 2px auto; }
.vm-menu { height: 35px; flex: none; display: flex; align-items: center; padding: 0 0 3px 16px; font-family: "Open Sans", sans-serif; font-size: 17.500px; color: #000; }
.m1 { width: 60px; } .m2 { width: 100px; } .m3 { width: 70px; } .m4 { width: 75px; } .m5 { width: 94px; }
.m4, .m5 { letter-spacing: -.1px; }

/* Kali panel */
.panel { position: relative; height: 32px; flex: none; display: flex; border-bottom: 2px solid #111318; color: #eee; font-size: 14.500px; background: #1c1e2c; }
.wall { position: absolute; left: 0; top: 0; }
.panel > div { position: relative; }
.launchers { width: 182px; display: flex; align-items: center; padding-left: 3px; gap: 8px; }
.psep { width: 2px; height: 22px; background: #8b97a0; }
.launchers .psep { margin: 0 0 0 5px; }
.launchers .s2 { margin-left: -3px; }
.ws { width: 61px; height: 29px; margin-top: 1px; border: 1px solid #fff; background: #4b4b4b; display: flex; align-items: center; justify-content: center; }
.gapband { width: 63px; background: #2e2f3a; }
.task { display: flex; align-items: center; height: 30px; letter-spacing: -.19px; }
.task span { margin-bottom: 2px; }
.t-burp { width: 208px; padding-left: 11px; gap: 9px; }
.t-fox { width: 200px; padding: 0 0 0 4px; gap: 9px; background: #1e2e37; box-shadow: inset 0 4px #2777ff; }
.ptray { margin-left: auto; width: 280px; display: flex; align-items: center; }
.ptray span { margin-bottom: 2px; }
.ptime { width: 71px; letter-spacing: -.1px; }
.p2 { margin-left: 18px; } .p3 { margin-left: 15px; } .p4 { margin-left: 15px; }
.pbat { margin-left: 7px; width: 36px; }
.s3 { width: 1px; }
.p5 { margin-left: 12px; } .p6 { margin-left: 16px; }

/* Firefox chrome */
.fx-title { height: 28px; flex: none; background: linear-gradient(#1c1e23, #22252c); position: relative; display: flex; justify-content: center; align-items: center; padding: 0 60px 3px 0; color: #f1f1f1; font-weight: 700; font-size: 11.500px; letter-spacing: -.34px; }
.fxbtns { position: absolute; right: 3px; top: 9px; }
.tabs { height: 32px; flex: none; display: flex; background: #23262e; border-bottom: 1px solid #14161a; color: #e8e8e8; font-size: 14.500px; letter-spacing: -.15px; }
.tab { width: 225px; display: flex; align-items: center; padding: 0 12px 0 9px; height: 31px; position: relative; }
.tab:not(.on)::after { content: ""; position: absolute; right: 0; top: 4px; width: 1px; height: 24px; background: #5b5d63; }
.tab:nth-child(3)::after { display: none; }
.first { padding-left: 10px; }
.tt { margin-left: 6px; margin-bottom: 2px; flex: 1; overflow: hidden; -webkit-mask-image: linear-gradient(90deg, #000 132px, transparent 168px); mask-image: linear-gradient(90deg, #000 132px, transparent 168px); }
.first .tt { margin-left: 7px; letter-spacing: -.2px; }
.x { margin-left: 6px; }
.on { background: #42454c; height: 32px; width: 224px; box-shadow: inset 0 2px #2777ff; }
.plus { margin: 8px 0 0 10px; }
.navbar { height: 40px; flex: none; display: flex; align-items: center; background: #42454c; padding: 0 13px 0 4px; }
.back { width: 32px; height: 32px; border-radius: 50%; background: #55575e; box-shadow: 0 0 0 1px #3a3c42; display: flex; align-items: center; justify-content: center; }
.fwd { margin-left: 9px; } .rel { margin-left: 16px; } .home { margin-left: 16px; }
.url { margin-left: 125px; width: 1381px; height: 30px; border: 1px solid #0f1115; border-radius: 4px; background: #262833; display: flex; align-items: center; padding: 0 6px 0 8px; font-size: 15px; color: #8e9096; }
.usep { width: 1px; height: 22px; margin: 0 8px; background: #0f1115; }
.addr { margin-left: 10px; }
.addr b { font-weight: 400; color: #fff; }
.u-end { margin-left: auto; display: flex; align-items: center; gap: 12px; fill: #b1b1b3; }
.tools { margin-left: auto; display: flex; align-items: center; gap: 16px; }
.tools svg:nth-child(3) { margin: 0 -4px 4px 0; }
.tsep { width: 1px; height: 34px; background: #66686e; margin: 0 -1px 0 -5px; }
.bookmarks { height: 32px; flex: none; display: flex; align-items: center; background: #42454c; border-bottom: 1px solid #14161a; padding-left: 12px; font-size: 14.500px; letter-spacing: -.15px; color: #ececec; }
.bm { display: flex; align-items: center; gap: 4px; }
.bm span { margin-bottom: 2px; }
.b1 { width: 95px; } .b2 { width: 114px; } .b3 { width: 96px; } .b4 { width: 92px; } .b5 { width: 110px; } .b6 { width: 102px; } .b7 { width: 151px; } .b8 { width: 105px; } .b9 { width: 74px; }
.b8, .b9 { letter-spacing: 0; }

/* Web page */
.viewport { position: relative; height: 762px; flex: none; display: flex; overflow: hidden; background: #fff; font-family: "Liberation Sans", Arial, sans-serif; font-size: 16px; }
.page { width: 1908px; }
.scroll { width: 12px; background: #cdcdcd; padding: 3px 3px; }
.scroll i { height: 479px; border-radius: 3px; background: #7c7e7d; }
.wrap { width: 1140px; margin-left: 384px; display: flex; }
.lab-head { height: 142px; background: #333332; padding-top: 22px; color: #fff; }
.logo { box-sizing: content-box; border-right: 1px solid #fff; }
.lab-title { margin-left: 16px; margin-top: -6px; }
h1 { font-size: 24px; line-height: 24px; letter-spacing: .02px; }
.backlink { display: flex; align-items: center; gap: 4px; margin-top: 25px; line-height: 18px; color: #f63; }
.badge { margin-left: auto; width: 184px; height: 32px; border: 1px solid #73d26f; border-radius: 16px; background: #73d26f; display: flex; overflow: hidden; }
.badge b { width: 48px; padding: 1px 0 0 7px; line-height: 31px; font-size: 16.500px; }
.badge span { width: 98px; background: #333332; padding: 1px 0 0 8px; line-height: 30px; }
.banner { height: 62px; background: #f63; color: #fff; }
.banner .wrap { height: 62px; align-items: center; }
.banner p { font-size: 23px; }
.share { margin: 0 0 1px auto; width: 186px; height: 33px; background: #333332; display: flex; align-items: center; gap: 6px; padding-left: 16px; font-weight: 700; }
.cont { margin-left: 14px; width: 142px; display: flex; align-items: center; justify-content: space-between; }
.form { width: 1140px; margin-left: 384px; padding-top: 26px; color: #333; display: flex; flex-direction: column; }
h2 { font-size: 27.700px; line-height: 34px; color: #f63; }
.target { margin-top: 14px; line-height: 18px; letter-spacing: .02px; }
.lb { line-height: 18px; color: #999; margin-top: 16px; }
.check { margin: 10px 0 0 4px; }
.l-file { margin-top: 24px; }
.input { margin-top: 3px; height: 34px; border: 1px solid #e3e4e4; padding: 5px 7px; line-height: 18px; }
.input, .area { font-family: "Liberation Mono", monospace; font-size: 15px; letter-spacing: .59px; color: #505050; }
.l-head { margin-top: 20px; }
.area { position: relative; margin-top: 4px; height: 254px; border: 1px solid #c3c9c9; padding: 4px 6.500px; line-height: 19px; }
.grip { position: absolute; right: 0; bottom: 0; }
.l-body { margin-top: 22px; }
.cursor { position: absolute; left: 930px; top: 228px; }

/* VirtualBox status bar */
.status { height: 36px; flex: none; background: #f0f0f0; display: flex; align-items: center; gap: 4px; padding-left: 1544px; font-family: "Open Sans", sans-serif; font-size: 16px; color: #000; }
.status svg { width: 24px; height: 24px; }
.status span { letter-spacing: -.3px; }
```
